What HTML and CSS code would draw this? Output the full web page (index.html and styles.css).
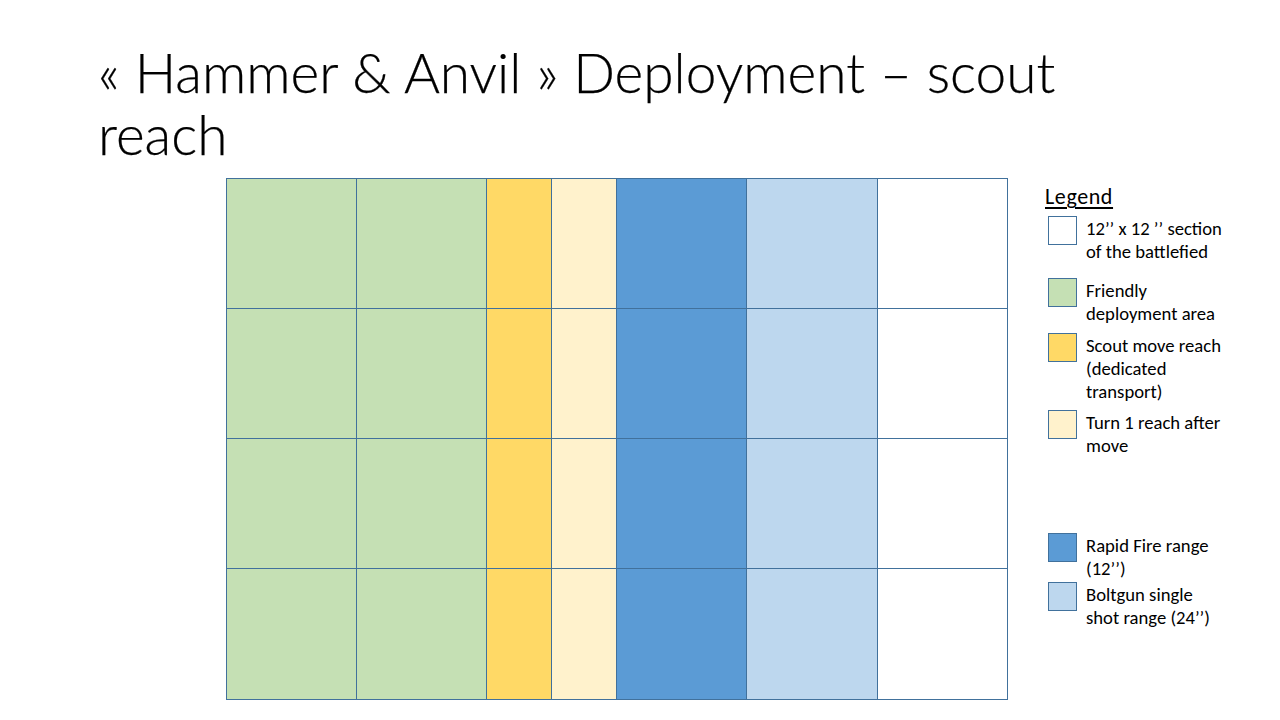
FILE: index.html
```html
<!DOCTYPE html>
<html lang="en">
<head>
<meta charset="utf-8">
<title>Hammer &amp; Anvil Deployment – scout reach</title>
<link rel="stylesheet" href="styles.css">
</head>
<body>
<div class="slide">
  <h1 class="title">« Hammer &amp; Anvil » Deployment – scout<br>reach</h1>
  <div class="content">
    <div class="board">
      <div class="cell friendly"></div><div class="cell friendly"></div><div class="cell scout"></div><div class="cell turn1"></div><div class="cell rapid"></div><div class="cell bolt"></div><div class="cell empty"></div>
      <div class="cell friendly"></div><div class="cell friendly"></div><div class="cell scout"></div><div class="cell turn1"></div><div class="cell rapid"></div><div class="cell bolt"></div><div class="cell empty"></div>
      <div class="cell friendly"></div><div class="cell friendly"></div><div class="cell scout"></div><div class="cell turn1"></div><div class="cell rapid"></div><div class="cell bolt"></div><div class="cell empty"></div>
      <div class="cell friendly"></div><div class="cell friendly"></div><div class="cell scout"></div><div class="cell turn1"></div><div class="cell rapid"></div><div class="cell bolt"></div><div class="cell empty"></div>
    </div>
    <aside class="legend">
      <h2 class="legend-title">Legend</h2>
      <div class="item item-1">
        <span class="swatch empty"></span>
        <p class="label">12’’ x 12 ’’ section<br>of the battlefied</p>
      </div>
      <div class="item item-2">
        <span class="swatch friendly"></span>
        <p class="label">Friendly<br>deployment area</p>
      </div>
      <div class="item item-3">
        <span class="swatch scout"></span>
        <p class="label">Scout move reach<br>(dedicated<br>transport)</p>
      </div>
      <div class="item item-4">
        <span class="swatch turn1"></span>
        <p class="label">Turn 1 reach after<br>move</p>
      </div>
      <div class="item item-5">
        <span class="swatch rapid"></span>
        <p class="label">Rapid Fire range<br>(12’’)</p>
      </div>
      <div class="item item-6">
        <span class="swatch bolt"></span>
        <p class="label">Boltgun single<br>shot range (24’’)</p>
      </div>
    </aside>
  </div>
</div>
</body>
</html>
```

FILE: styles.css
```css
* { box-sizing: border-box; }

html, body {
  margin: 0;
  padding: 0;
  background: #ffffff;
}

.slide {
  width: 1280px;
  height: 720px;
  overflow: hidden;
  position: relative;
  background: #ffffff;
  color: #000000;
  font-family: "Carlito", "Lato", "Liberation Sans", sans-serif;
}

.title {
  margin: 0;
  padding: 41px 0 0 98px;
  font-family: "Lato", "Carlito", "Open Sans", sans-serif;
  font-weight: 300;
  font-size: 55px;
  line-height: 62px;
  white-space: nowrap;
  -webkit-text-stroke: 0.25px #000000;
}

.content {
  display: flex;
  align-items: flex-start;
  margin-top: 13px;
  padding-left: 226px;
}

.board {
  display: grid;
  grid-template-columns: 129px 129px 64px 64px 129px 130px 129px;
  grid-template-rows: 129px 129px 129px 130px;
  gap: 1px;
  padding: 1px;
  background: #41719c;
  width: 782px;
}

.friendly { background: #c5e0b4; }
.scout    { background: #ffd966; }
.turn1    { background: #fff2cc; }
.rapid    { background: #5b9bd5; }
.bolt     { background: #bdd7ee; }
.empty    { background: #ffffff; }

.legend {
  margin-left: 37px;
  margin-top: 7px;
  width: 200px;
}

.legend-title {
  margin: 0;
  font-size: 22px;
  font-weight: 400;
  line-height: 24px;
  letter-spacing: 0.6px;
  text-decoration: underline;
  text-decoration-thickness: 1.5px;
  text-underline-offset: 3px;
}

.item {
  display: flex;
  align-items: flex-start;
  gap: 9px;
  padding-left: 3px;
}

.swatch {
  flex: none;
  width: 29px;
  height: 29px;
  border: 1px solid #41719c;
}

.label {
  margin: 0;
  padding-top: 1px;
  font-size: 18.67px;
  line-height: 23px;
  white-space: nowrap;
}

.item-1 { margin-top: 7px; }
.item-2 { margin-top: 15px; }
.item-3 { margin-top: 8px; }
.item-4 { margin-top: 7px; }
.item-5 { margin-top: 76px; }
.item-6 { margin-top: 2px; }
```
